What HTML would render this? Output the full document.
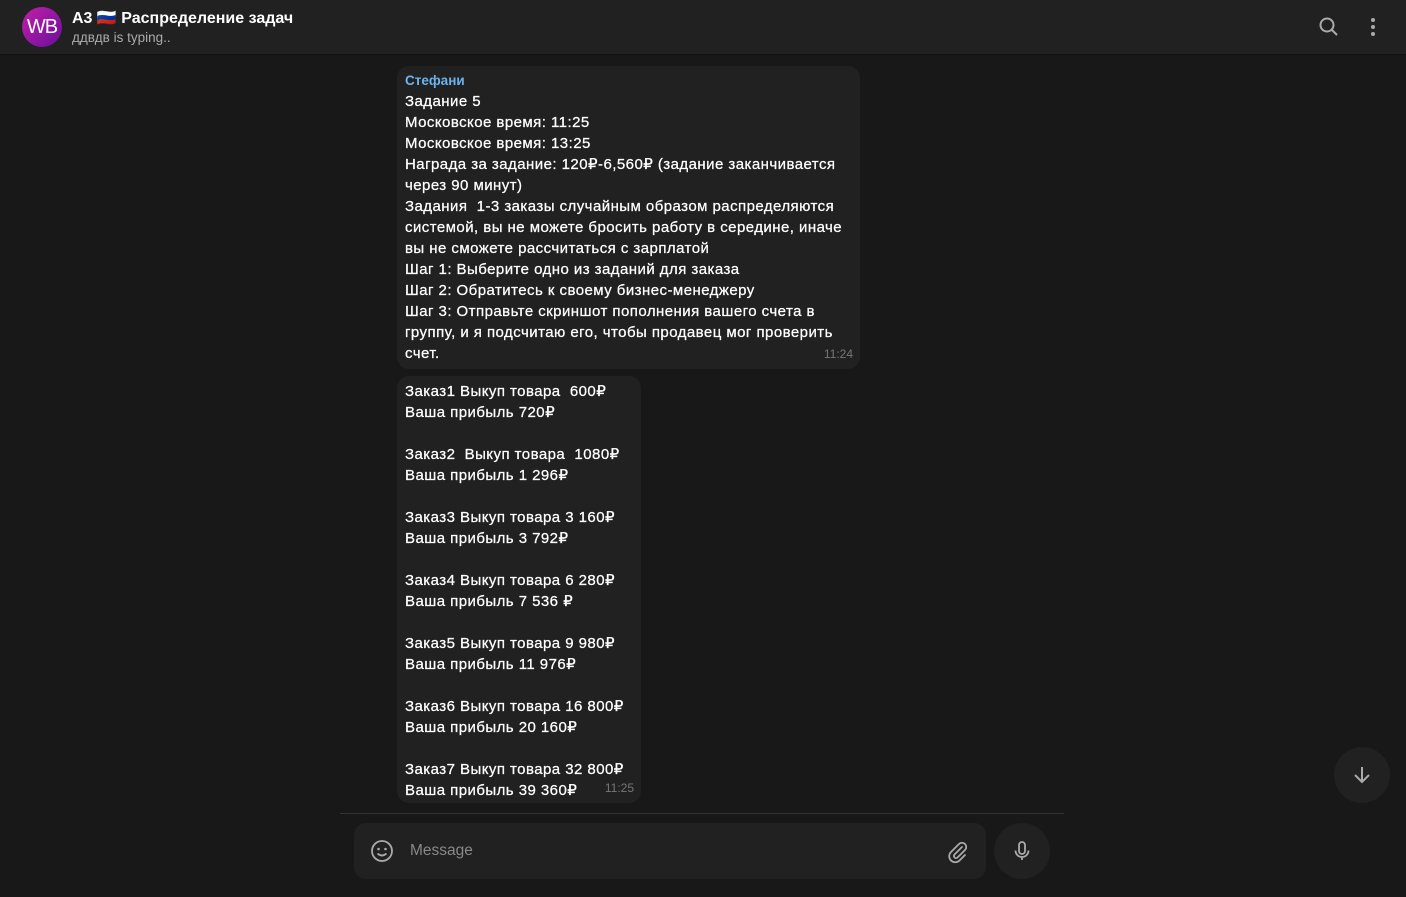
<!DOCTYPE html>
<html><head><meta charset="utf-8"><style>
body{margin:0;width:1406px;height:897px;background:#181818;font-family:"Liberation Sans","Noto Sans CJK SC",sans-serif;overflow:hidden;position:relative;color:#fff}
.hdr{position:absolute;left:0;top:0;width:1406px;height:54px;background:#212121;border-bottom:1px solid #111}
.av{position:absolute;left:22px;top:7px;width:40px;height:40px;border-radius:50%;background:linear-gradient(135deg,#c21fa8,#6a0f9e);color:#fff;font-size:20px;line-height:40px;text-align:center;letter-spacing:-1px}
.t{position:absolute;left:72px;top:8px;font-size:16px;font-weight:bold}
.s{position:absolute;left:72px;top:30px;font-size:13.5px;color:#aaa}
.b{position:absolute;left:397px;background:#212121;border-radius:12px;font-size:15px;line-height:21px;padding:4px 8px;box-sizing:border-box;white-space:nowrap;letter-spacing:0.45px;-webkit-text-stroke:0.25px #fff}
.tm{position:absolute;right:7px;bottom:4px;font-size:12px;color:#777;letter-spacing:0;-webkit-text-stroke:0}
.inp{position:absolute;left:354px;top:823px;width:632px;height:56px;background:#212121;border-radius:12px}
.mic{position:absolute;left:994px;top:823px;width:56px;height:56px;border-radius:50%;background:#212121}
.down{position:absolute;left:1334px;top:747px;width:56px;height:56px;border-radius:50%;background:#212121}
</style></head><body>
<div class="hdr">
<div class="av">WB</div>
<div class="t">А3 🇷🇺 Распределение задач</div>
<div class="s">ддвдв is typing..</div>
<svg style="position:absolute;left:1318px;top:16px" width="22" height="22" viewBox="0 0 22 22"><circle cx="9" cy="9" r="6.5" stroke="#aaa" stroke-width="2" fill="none"/><path d="M14 14l5 5" stroke="#aaa" stroke-width="2"/></svg>
<svg style="position:absolute;left:1368px;top:17px" width="10" height="20"><circle cx="5" cy="3" r="2" fill="#aaa"/><circle cx="5" cy="10" r="2" fill="#aaa"/><circle cx="5" cy="17" r="2" fill="#aaa"/></svg>
</div>
<div class="b" style="top:66px;width:463px;height:303px;padding-top:5px">
<div style="color:#6cb3f0;font-size:13.5px;font-weight:bold;line-height:20px;letter-spacing:0;-webkit-text-stroke:0">Стефани</div>
Задание 5<br>Московское время: 11:25<br>Московское время: 13:25<br>Награда за задание: 120₽-6,560₽ (задание заканчивается<br>через 90 минут)<br>Задания&nbsp; 1-3 заказы случайным образом распределяются<br>системой, вы не можете бросить работу в середине, иначе<br>вы не сможете рассчитаться с зарплатой<br>Шаг 1: Выберите одно из заданий для заказа<br>Шаг 2: Обратитесь к своему бизнес-менеджеру<br>Шаг 3: Отправьте скриншот пополнения вашего счета в<br>группу, и я подсчитаю его, чтобы продавец мог проверить<br>счет.
<span class="tm">11:24</span></div>
<div class="b" style="top:376px;width:244px;height:427px;padding-top:5px">
Заказ1 Выкуп товара&nbsp; 600₽<br>Ваша прибыль 720₽<br><br>Заказ2&nbsp; Выкуп товара&nbsp; 1080₽<br>Ваша прибыль 1 296₽<br><br>Заказ3 Выкуп товара 3 160₽<br>Ваша прибыль 3 792₽<br><br>Заказ4 Выкуп товара 6 280₽<br>Ваша прибыль 7 536 ₽<br><br>Заказ5 Выкуп товара 9 980₽<br>Ваша прибыль 11 976₽<br><br>Заказ6 Выкуп товара 16 800₽<br>Ваша прибыль 20 160₽<br><br>Заказ7 Выкуп товара 32 800₽<br>Ваша прибыль 39 360₽
<span class="tm">11:25</span></div>
<div style="position:absolute;left:340px;top:813px;width:724px;height:1px;background:#333"></div>
<div class="inp">
<svg style="position:absolute;left:16px;top:16px" width="24" height="24" viewBox="0 0 24 24"><circle cx="12" cy="12" r="10" stroke="#aaa" stroke-width="1.8" fill="none"/><circle cx="8.5" cy="10" r="1.3" fill="#aaa"/><circle cx="15.5" cy="10" r="1.3" fill="#aaa"/><path d="M7.5 14.5q4.5 4 9 0" stroke="#aaa" stroke-width="1.8" fill="none"/></svg>
<div style="position:absolute;left:56px;top:19px;font-size:15.5px;color:#888">Message</div>
<svg style="position:absolute;left:592px;top:17px" width="24" height="24" viewBox="0 0 24 24"><path d="M16 7l-7.5 7.5a2 2 0 003 3L19 10a4 4 0 00-6-6l-8 8a6 6 0 008.5 8.5L19 15" stroke="#aaa" stroke-width="1.8" fill="none" stroke-linecap="round"/></svg>
</div>
<div class="mic"><svg style="position:absolute;left:16px;top:16px" width="24" height="24" viewBox="0 0 24 24"><rect x="9" y="3" width="6" height="12" rx="3" stroke="#aaa" stroke-width="1.8" fill="none"/><path d="M5.5 11.5a6.5 6.5 0 0013 0M12 18v3" stroke="#aaa" stroke-width="1.8" fill="none"/></svg></div>
<div class="down"><svg style="position:absolute;left:16px;top:16px" width="24" height="24" viewBox="0 0 24 24"><path d="M12 4v15M5 12l7 7 7-7" stroke="#aaa" stroke-width="2" fill="none"/></svg></div>
</body></html>
